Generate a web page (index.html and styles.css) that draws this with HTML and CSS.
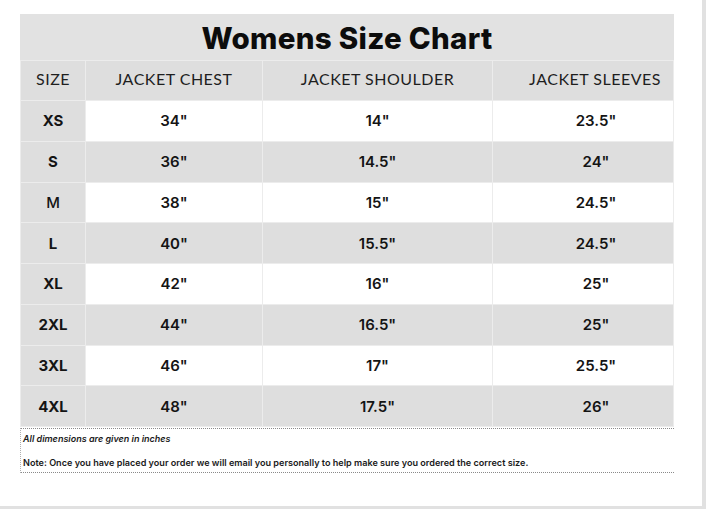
FILE: index.html
```html
<!DOCTYPE html>
<html lang="en">
<head>
<meta charset="utf-8">
<title>Womens Size Chart</title>
<link rel="stylesheet" href="styles.css">
</head>
<body>
<div class="frame">
  <div class="sheet">
    <table class="chart">
      <colgroup>
        <col class="c-size">
        <col class="c-chest">
        <col class="c-shoulder">
        <col class="c-sleeves">
      </colgroup>
      <thead>
        <tr class="title-row"><th colspan="4" class="title">Womens Size Chart</th></tr>
        <tr class="head-row">
          <th>SIZE</th>
          <th>JACKET CHEST</th>
          <th>JACKET SHOULDER</th>
          <th class="last">JACKET SLEEVES</th>
        </tr>
      </thead>
      <tbody>
        <tr class="light"><td class="size">XS</td><td>34"</td><td>14"</td><td class="last">23.5"</td></tr>
        <tr class="dark"><td class="size">S</td><td>36"</td><td>14.5"</td><td class="last">24"</td></tr>
        <tr class="light"><td class="size thin">M</td><td>38"</td><td>15"</td><td class="last">24.5"</td></tr>
        <tr class="dark"><td class="size">L</td><td>40"</td><td>15.5"</td><td class="last">24.5"</td></tr>
        <tr class="light"><td class="size">XL</td><td>42"</td><td>16"</td><td class="last">25"</td></tr>
        <tr class="dark"><td class="size">2XL</td><td>44"</td><td>16.5"</td><td class="last">25"</td></tr>
        <tr class="light"><td class="size">3XL</td><td>46"</td><td>17"</td><td class="last">25.5"</td></tr>
        <tr class="dark"><td class="size">4XL</td><td>48"</td><td>17.5"</td><td class="last">26"</td></tr>
      </tbody>
    </table>
    <div class="notes">
      <p class="dims">All dimensions are given in inches</p>
      <p class="note">Note: Once you have placed your order we will email you personally to help make sure you ordered the correct size.</p>
    </div>
  </div>
</div>
</body>
</html>
```

FILE: styles.css
```css
html, body {
  margin: 0;
  padding: 0;
  background: #ffffff;
}

.frame {
  width: 702px;
  height: 506px;
  border-right: 4px solid #e1e1e1;
  border-bottom: 3px solid #e1e1e1;
  background: #ffffff;
  overflow: hidden;
}

.sheet {
  padding: 14px 0 0 20px;
  width: 653px;
}

.chart {
  border-collapse: collapse;
  table-layout: fixed;
  width: 653px;
  color: #111111;
}

.c-size { width: 65px; }
.c-chest { width: 177px; }
.c-shoulder { width: 230px; }
.c-sleeves { width: 181px; }

.chart th,
.chart td {
  padding: 0;
  text-align: center;
  vertical-align: middle;
  border: 1px solid #ececec;
}

.title-row th {
  height: 45px;
  background: #e2e2e2;
  font-family: "Inter", "Liberation Sans", sans-serif;
  font-weight: 800;
  font-size: 29.5px;
  letter-spacing: 0.3px;
  color: #0c0c0c;
  border-color: #e2e2e2;
  border-bottom-color: #ececec;
}

.head-row th {
  height: 35px;
  padding-bottom: 4px;
  background: #dedede;
  font-family: "Lato", "Liberation Sans", sans-serif;
  font-weight: 400;
  font-size: 16px;
  letter-spacing: 0.5px;
  color: #1e1e1e;
}

.chart td {
  height: 39.75px;
  font-family: "Inter", "Liberation Sans", sans-serif;
  font-weight: 600;
  font-size: 15px;
  color: #141414;
}

.chart .last {
  padding-left: 24px;
}

.chart tbody td.last {
  padding-left: 26px;
}

.light td { background: #ffffff; }
.dark td { background: #dedede; }

.chart td.size {
  background: #dedede;
  font-weight: 700;
}

.chart td.size.thin {
  font-weight: 500;
}

.notes {
  width: 653px;
  border-top: 1px dotted #8a8a8a;
  border-bottom: 1px dotted #8a8a8a;
  border-left: 1px dotted #b0b0b0;
  margin-top: 1px;
  font-family: "Inter", "Liberation Sans", sans-serif;
  color: #1a1a1a;
}

.notes p {
  margin: 0;
  padding-left: 2px;
  line-height: 12px;
  white-space: nowrap;
}

.dims {
  padding-top: 4px;
  font-size: 9px;
  font-weight: 600;
  font-style: italic;
  height: 14px;
}

.note {
  padding-top: 10px;
  padding-bottom: 3px;
  font-size: 9.1px;
  font-weight: 600;
}
```
